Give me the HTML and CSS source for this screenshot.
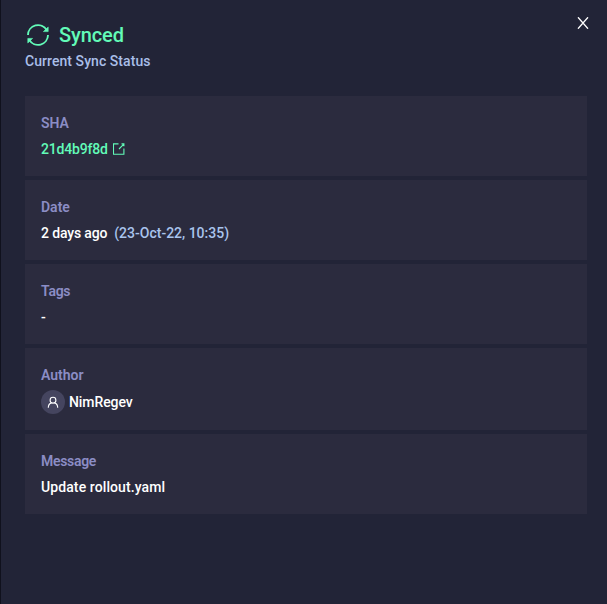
FILE: index.html
```html
<!DOCTYPE html>
<html lang="en">
<head>
<meta charset="utf-8">
<title>Sync status</title>
<link rel="stylesheet" href="styles.css">
</head>
<body>
<main class="panel">
  <header class="header">
    <div>
      <h1 class="title">
        <svg class="sync" width="24" height="24" viewBox="0 0 24 24" fill="none" stroke="currentColor" stroke-width="1.9"><path d="M2 12A10 10 0 0 1 20.6 7M22 12a10 10 0 0 1-18.6 5"/><path d="M22.2 4v4.6h-4.8zM1.8 20v-4.6h4.8z" fill="currentColor" stroke-width=".6"/></svg>
        <span class="title-text">Synced</span>
      </h1>
      <p class="subtitle">Current Sync Status</p>
    </div>
    <button class="close" aria-label="Close"><svg width="12" height="12" viewBox="0 0 12 12" fill="none" stroke="currentColor" stroke-width="1.35"><path d="M1 .3 11 11.7M11 .3 1 11.7"/></svg></button>
  </header>
  <section class="cards">
    <article class="card">
      <h2 class="label">SHA</h2>
      <a class="value link"><span class="sha">21d4b9f8d</span><svg width="12" height="12" viewBox="0 0 12 12" fill="none" stroke="currentColor" stroke-width="1.1"><path d="M5.5 .9H.5v10.4h10.4V5.5M6 6l4.8-4.8M8.5 .9h2.4v2.4"/></svg></a>
    </article>
    <article class="card">
      <h2 class="label">Date</h2>
      <p class="value"><span class="ago">2 days ago</span><span class="stamp">(23-Oct-22, 10:35)</span></p>
    </article>
    <article class="card">
      <h2 class="label tags-label">Tags</h2>
      <p class="value">-</p>
    </article>
    <article class="card author">
      <h2 class="label">Author</h2>
      <p class="value person"><span class="avatar"><svg width="12" height="13" viewBox="0 0 12 13" fill="none" stroke="currentColor" stroke-width="1.1"><circle cx="6" cy="4.2" r="2.9"/><path d="M1.3 11.7Q1.3 7.8 4.6 6.9M10.7 11.7Q10.7 7.8 7.4 6.9"/></svg></span><span class="name">NimRegev</span></p>
    </article>
    <article class="card">
      <h2 class="label message-label">Message</h2>
      <p class="value message">Update rollout.yaml</p>
    </article>
  </section>
</main>
</body>
</html>
```
FILE: styles.css
```css
* { box-sizing: border-box; }
body { margin: 0; background: #222437; font-family: Roboto, "Liberation Sans", sans-serif; font-size: 14px; font-weight: 500; }
h1, h2, p { margin: 0; font-weight: 500; }
.panel { height: 604px; border-left: 1px solid #10111d; padding: 23px 20px 0 24px; }
.header { display: flex; justify-content: space-between; height: 73px; }
.title { display: flex; align-items: center; gap: 9px; height: 24px; padding-left: 1px; color: #62fbb8; font-size: 20px; line-height: 24px; }
.sync { flex: none; }
.title-text { letter-spacing: -0.1px; }
.subtitle { margin-top: 6px; line-height: 16px; color: #a9bee8; letter-spacing: 0.06px; white-space: nowrap; }
.close { align-self: flex-start; display: flex; margin: -6px -2px 0 0; padding: 0; border: 0; background: none; color: #fff; }
.cards { display: flex; flex-direction: column; gap: 4px; }
.card { height: 80px; padding: 19px 16px 0; background: #2b2b3e; }
.card.author { height: 82px; }
.label { color: #8b8dc5; font-size: 14px; font-weight: 600; line-height: 16px; }
.tags-label { letter-spacing: -0.25px; }
.message-label { letter-spacing: -0.3px; }
.value { display: flex; align-items: center; height: 16px; margin-top: 10px; color: #fff; line-height: 16px; white-space: nowrap; }
.value span { flex: none; }
.link { gap: 5px; color: #62fbb8; }
.sha { letter-spacing: -0.2px; }
.ago { letter-spacing: -0.15px; }
.stamp { margin-left: 7px; color: #a9c4ed; letter-spacing: 0; }
.person { height: 24px; margin-top: 7px; gap: 4px; }
.name { letter-spacing: -0.08px; }
.message { letter-spacing: 0.1px; }
.avatar { display: flex; align-items: center; justify-content: center; width: 24px; height: 24px; border-radius: 50%; background: #45455f; }
```
